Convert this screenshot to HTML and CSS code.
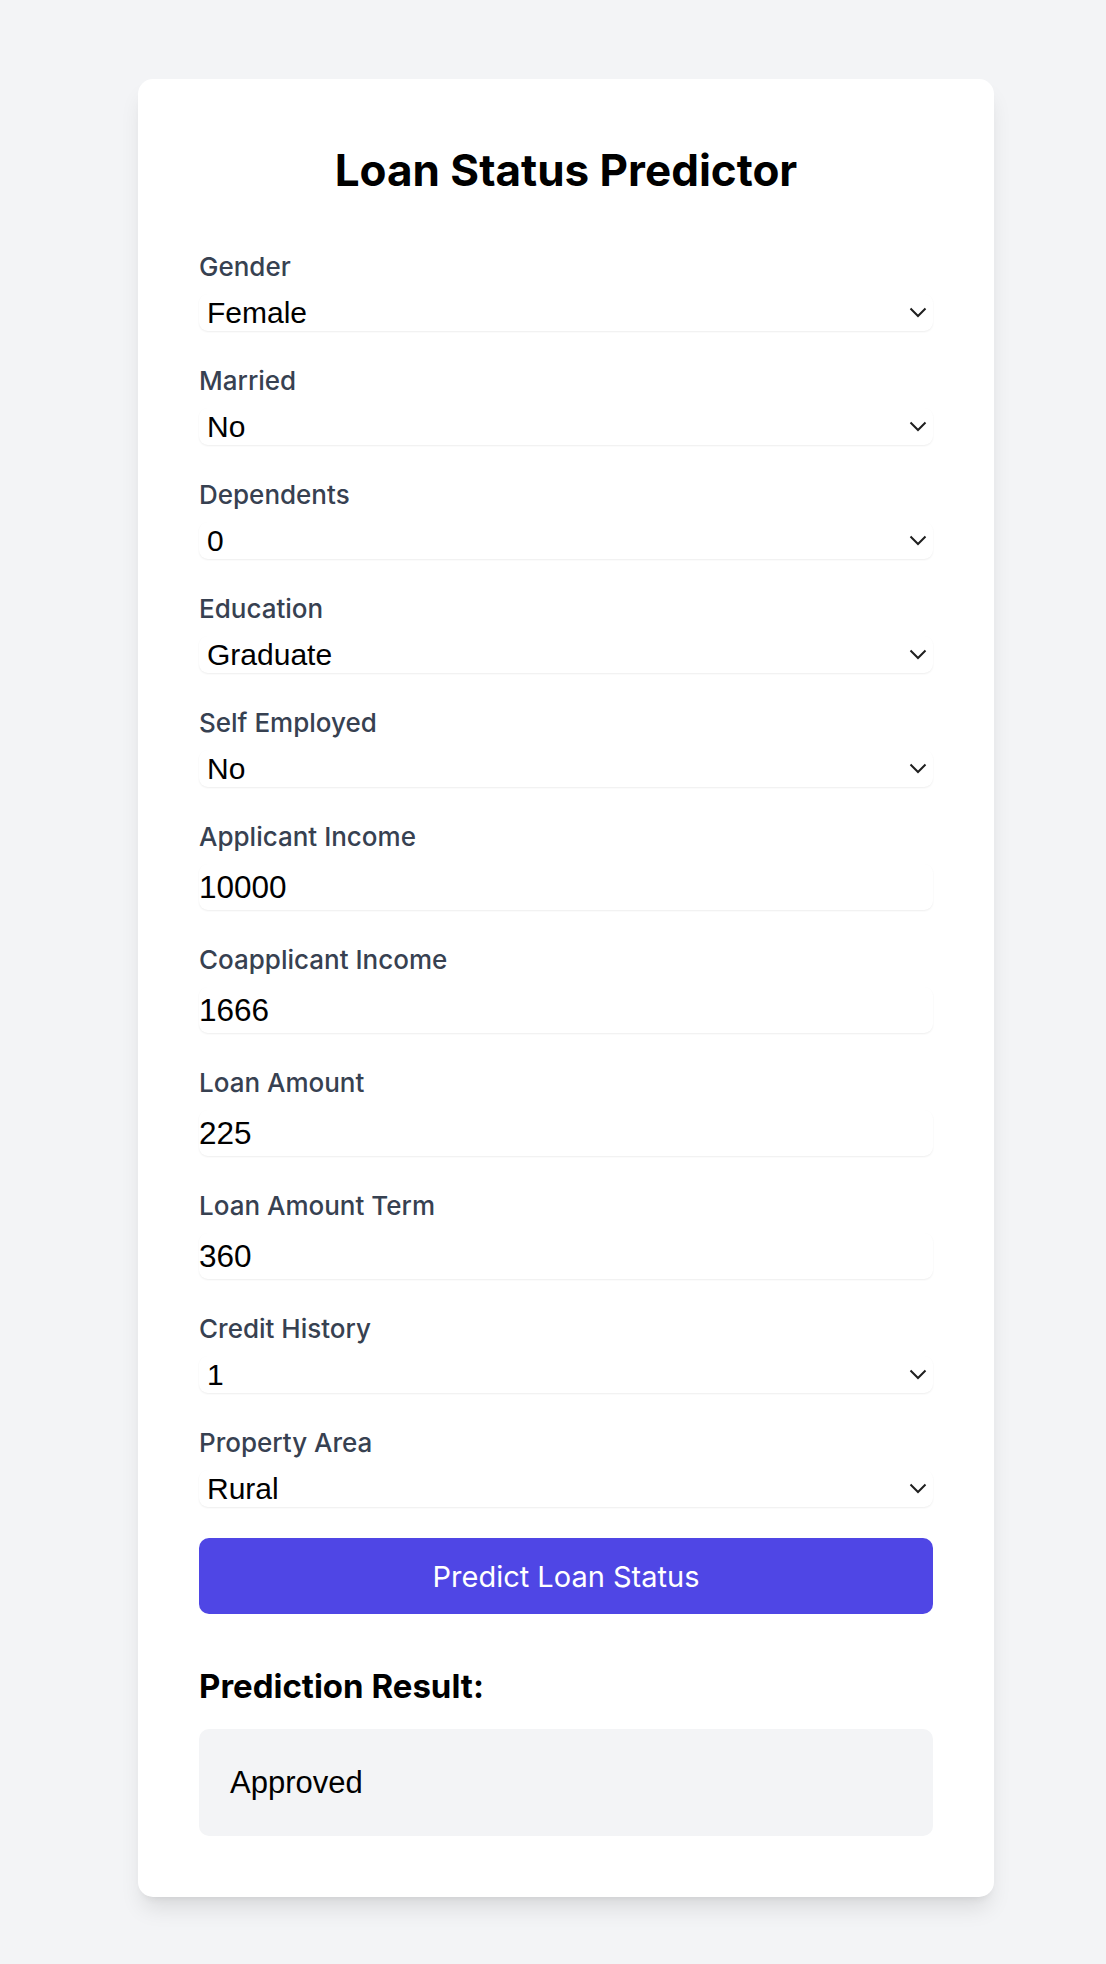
FILE: index.html
```html
<!DOCTYPE html>
<html lang="en">
<head>
<meta charset="utf-8">
<title>Loan Status Predictor</title>
<link rel="stylesheet" href="styles.css">
</head>
<body>
<main class="card">
  <h1 class="title">Loan Status Predictor</h1>
  <form class="fields">
    <div class="field">
      <label class="label">Gender</label>
      <div class="select-wrap">
        <select class="select"><option>Female</option><option>Male</option></select>
        <svg class="chev" width="18" height="11" viewBox="0 0 18 11"><path d="M1.5 1.5 L9 9 L16.5 1.5" fill="none" stroke="#1f1f1f" stroke-width="2"/></svg>
      </div>
    </div>
    <div class="field">
      <label class="label">Married</label>
      <div class="select-wrap">
        <select class="select"><option>No</option><option>Yes</option></select>
        <svg class="chev" width="18" height="11" viewBox="0 0 18 11"><path d="M1.5 1.5 L9 9 L16.5 1.5" fill="none" stroke="#1f1f1f" stroke-width="2"/></svg>
      </div>
    </div>
    <div class="field">
      <label class="label">Dependents</label>
      <div class="select-wrap">
        <select class="select"><option>0</option><option>1</option><option>2</option><option>3+</option></select>
        <svg class="chev" width="18" height="11" viewBox="0 0 18 11"><path d="M1.5 1.5 L9 9 L16.5 1.5" fill="none" stroke="#1f1f1f" stroke-width="2"/></svg>
      </div>
    </div>
    <div class="field">
      <label class="label">Education</label>
      <div class="select-wrap">
        <select class="select"><option>Graduate</option><option>Not Graduate</option></select>
        <svg class="chev" width="18" height="11" viewBox="0 0 18 11"><path d="M1.5 1.5 L9 9 L16.5 1.5" fill="none" stroke="#1f1f1f" stroke-width="2"/></svg>
      </div>
    </div>
    <div class="field">
      <label class="label">Self Employed</label>
      <div class="select-wrap">
        <select class="select"><option>No</option><option>Yes</option></select>
        <svg class="chev" width="18" height="11" viewBox="0 0 18 11"><path d="M1.5 1.5 L9 9 L16.5 1.5" fill="none" stroke="#1f1f1f" stroke-width="2"/></svg>
      </div>
    </div>
    <div class="field">
      <label class="label">Applicant Income</label>
      <input class="input" type="text" value="10000">
    </div>
    <div class="field">
      <label class="label">Coapplicant Income</label>
      <input class="input" type="text" value="1666">
    </div>
    <div class="field">
      <label class="label">Loan Amount</label>
      <input class="input" type="text" value="225">
    </div>
    <div class="field">
      <label class="label">Loan Amount Term</label>
      <input class="input" type="text" value="360">
    </div>
    <div class="field">
      <label class="label">Credit History</label>
      <div class="select-wrap">
        <select class="select"><option>1</option><option>0</option></select>
        <svg class="chev" width="18" height="11" viewBox="0 0 18 11"><path d="M1.5 1.5 L9 9 L16.5 1.5" fill="none" stroke="#1f1f1f" stroke-width="2"/></svg>
      </div>
    </div>
    <div class="field">
      <label class="label">Property Area</label>
      <div class="select-wrap">
        <select class="select"><option>Rural</option><option>Semiurban</option><option>Urban</option></select>
        <svg class="chev" width="18" height="11" viewBox="0 0 18 11"><path d="M1.5 1.5 L9 9 L16.5 1.5" fill="none" stroke="#1f1f1f" stroke-width="2"/></svg>
      </div>
    </div>
  </form>
  <button class="button" type="button">Predict Loan Status</button>
  <h2 class="result-title">Prediction Result:</h2>
  <div class="result">Approved</div>
</main>
</body>
</html>
```

FILE: styles.css
```css
* { box-sizing: border-box; }

html, body {
  margin: 0;
  padding: 0;
}

body {
  background: #f3f4f6;
  font-family: Inter, "Noto Sans", sans-serif;
  color: #000;
  padding-top: 79px;
  padding-bottom: 67px;
}

.card {
  margin-left: 138px;
  width: 856px;
  background: #ffffff;
  border-radius: 15px;
  padding: 61px;
  box-shadow: 0 15px 22px -4px rgba(0, 0, 0, 0.1), 0 6px 9px -6px rgba(0, 0, 0, 0.1);
}

.title {
  margin: 0 0 54px 0;
  padding-top: 2px;
  font-size: 44px;
  line-height: 56px;
  font-weight: 700;
  text-align: center;
  color: #000;
}

.fields {
  display: flex;
  flex-direction: column;
  gap: 35px;
  margin: 0;
}

.field {
  display: flex;
  flex-direction: column;
  gap: 12px;
}

.label {
  font-size: 26px;
  line-height: 30px;
  font-weight: 500;
  color: #374151;
}

.select-wrap {
  position: relative;
}

.select {
  display: block;
  width: 100%;
  height: 37px;
  margin: 0;
  padding: 0 0 0 8px;
  border: none;
  outline: none;
  border-radius: 9px;
  background: #fff;
  appearance: none;
  -webkit-appearance: none;
  font-family: "Liberation Sans", Arial, sans-serif;
  font-size: 30px;
  color: #000;
  box-shadow: 0 1px 2px 0 rgba(0, 0, 0, 0.07);
}

.chev {
  position: absolute;
  right: 6px;
  top: 13px;
  pointer-events: none;
}

.input {
  display: block;
  width: 100%;
  height: 46px;
  margin: 0;
  padding: 0;
  border: none;
  outline: none;
  border-radius: 9px;
  background: #fff;
  font-family: "Liberation Sans", Arial, sans-serif;
  font-size: 31.5px;
  color: #000;
  box-shadow: 0 1px 2px 0 rgba(0, 0, 0, 0.07);
}

.button {
  display: block;
  width: 100%;
  height: 76px;
  margin: 31px 0 0 0;
  border: none;
  border-radius: 10px;
  background: #4f46e5;
  color: #fff;
  font-family: Inter, "Noto Sans", sans-serif;
  font-size: 29px;
  font-weight: 400;
}

.result-title {
  margin: 50px 0 21px 0;
  font-size: 33px;
  line-height: 44px;
  font-weight: 700;
  color: #000;
}

.result {
  display: flex;
  align-items: center;
  height: 107px;
  padding: 0 31px;
  border-radius: 10px;
  background: #f3f4f6;
  font-family: "Liberation Sans", Arial, sans-serif;
  font-size: 31px;
  color: #000;
}
```
